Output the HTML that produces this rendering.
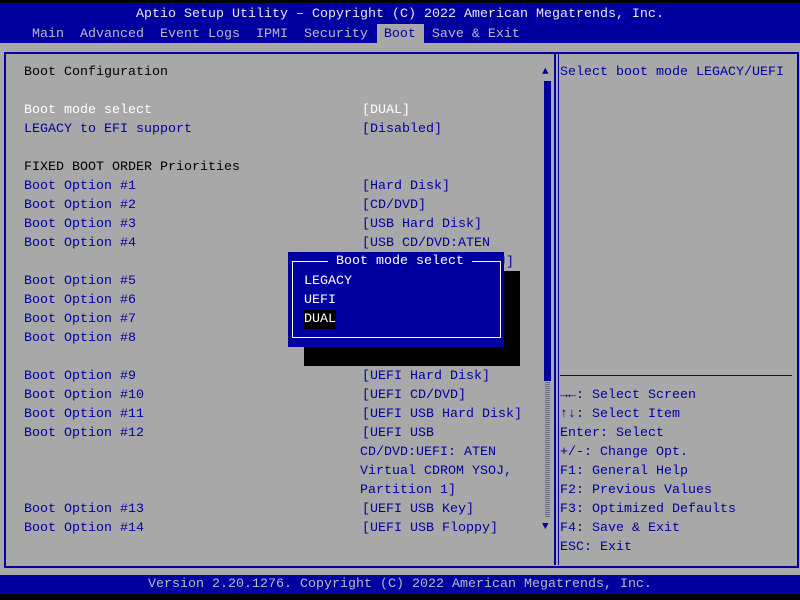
<!DOCTYPE html>
<html><head><style>
*{margin:0;padding:0}
body{width:800px;height:600px;background:#000;position:relative;overflow:hidden;font-family:"Liberation Mono",monospace;font-size:13.33px;}
.a{position:absolute;white-space:pre;line-height:19px;}
.b{color:#0000a0}.k{color:#000}.w{color:#fff}
</style></head><body>
<div style="position:absolute;left:0;top:3px;width:800px;height:40px;background:#0000a0"></div>
<div class="a" style="left:0;top:5px;width:800px;text-align:center;color:#e8e8e8">Aptio Setup Utility – Copyright (C) 2022 American Megatrends, Inc.</div>
<div style="position:absolute;left:377px;top:24px;width:47px;height:19px;background:#a8a8a8"></div>
<div class="a" style="left:32px;top:25px;color:#b8b8c8">Main  Advanced  Event Logs  IPMI  Security  <span style="color:#0000a0">Boot</span>  Save &amp; Exit</div>
<div style="position:absolute;left:0;top:43px;width:800px;height:532px;background:#a8a8a8"></div>
<div style="position:absolute;left:4px;top:52px;width:791px;height:512px;border:2px solid #0000a0"></div>
<div style="position:absolute;left:554px;top:53px;width:2px;height:512px;background:#0000a0"></div>
<div style="position:absolute;left:558px;top:53px;width:1px;height:512px;background:#0000a0"></div>
<div style="position:absolute;left:560px;top:375px;width:232px;height:1px;background:#0000a0"></div>
<!-- scrollbar -->
<div class="a b" style="left:542px;top:63px;font-size:11px">▲</div>
<div style="position:absolute;left:544px;top:81px;width:7px;height:300px;background:#0000a0"></div>
<div style="position:absolute;left:545px;top:381px;width:5px;height:136px;background:repeating-linear-gradient(0deg,#6a6a88 0 1px,#a8a8a8 1px 2px)"></div>
<div class="a b" style="left:542px;top:518px;font-size:11px">▼</div>
<!-- left -->
<div class="a k" style="left:24px;top:63px">Boot Configuration</div>
<div class="a w" style="left:24px;top:101px">Boot mode select</div>
<div class="a w" style="left:362px;top:101px">[DUAL]</div>
<div class="a b" style="left:24px;top:120px">LEGACY to EFI support</div>
<div class="a b" style="left:362px;top:120px">[Disabled]</div>
<div class="a k" style="left:24px;top:158px">FIXED BOOT ORDER Priorities</div>
<div class="a b" style="left:24px;top:177px">Boot Option #1
Boot Option #2
Boot Option #3
Boot Option #4

Boot Option #5
Boot Option #6
Boot Option #7
Boot Option #8

Boot Option #9
Boot Option #10
Boot Option #11
Boot Option #12



Boot Option #13
Boot Option #14</div>
<div class="a b" style="left:362px;top:177px">[Hard Disk]
[CD/DVD]
[USB Hard Disk]
[USB CD/DVD:ATEN
Virtual CDROM YSOJ]</div>
<div class="a b" style="left:362px;top:367px">[UEFI Hard Disk]
[UEFI CD/DVD]
[UEFI USB Hard Disk]
[UEFI USB</div>
<div class="a b" style="left:360px;top:443px">CD/DVD:UEFI: ATEN
Virtual CDROM YSOJ,
Partition 1]</div>
<div class="a b" style="left:362px;top:500px">[UEFI USB Key]
[UEFI USB Floppy]</div>
<!-- popup -->
<div style="position:absolute;left:304px;top:271px;width:216px;height:95px;background:#000"></div>
<div style="position:absolute;left:288px;top:252px;width:216px;height:95px;background:#0000a0"></div>
<div style="position:absolute;left:292px;top:261px;width:207px;height:75px;border:1px solid #fff"></div>
<div class="a w" style="left:328px;top:252px;background:#0000a0;padding:0 8px">Boot mode select</div>
<div class="a w" style="left:304px;top:272px">LEGACY
UEFI</div>
<div class="a w" style="left:304px;top:310px;background:#000">DUAL</div>
<!-- help -->
<div class="a b" style="left:560px;top:63px">Select boot mode LEGACY/UEFI</div>
<div class="a b" style="left:560px;top:386px"><b>→←</b>: Select Screen
<b>↑↓</b>: Select Item
Enter: Select
+/-: Change Opt.
F1: General Help
F2: Previous Values
F3: Optimized Defaults
F4: Save &amp; Exit
ESC: Exit</div>
<div style="position:absolute;left:0;top:575px;width:800px;height:19px;background:#0000a0"></div>
<div class="a" style="left:0;top:575px;width:800px;text-align:center;color:#b8b8c8">Version 2.20.1276. Copyright (C) 2022 American Megatrends, Inc.</div>
</body></html>
